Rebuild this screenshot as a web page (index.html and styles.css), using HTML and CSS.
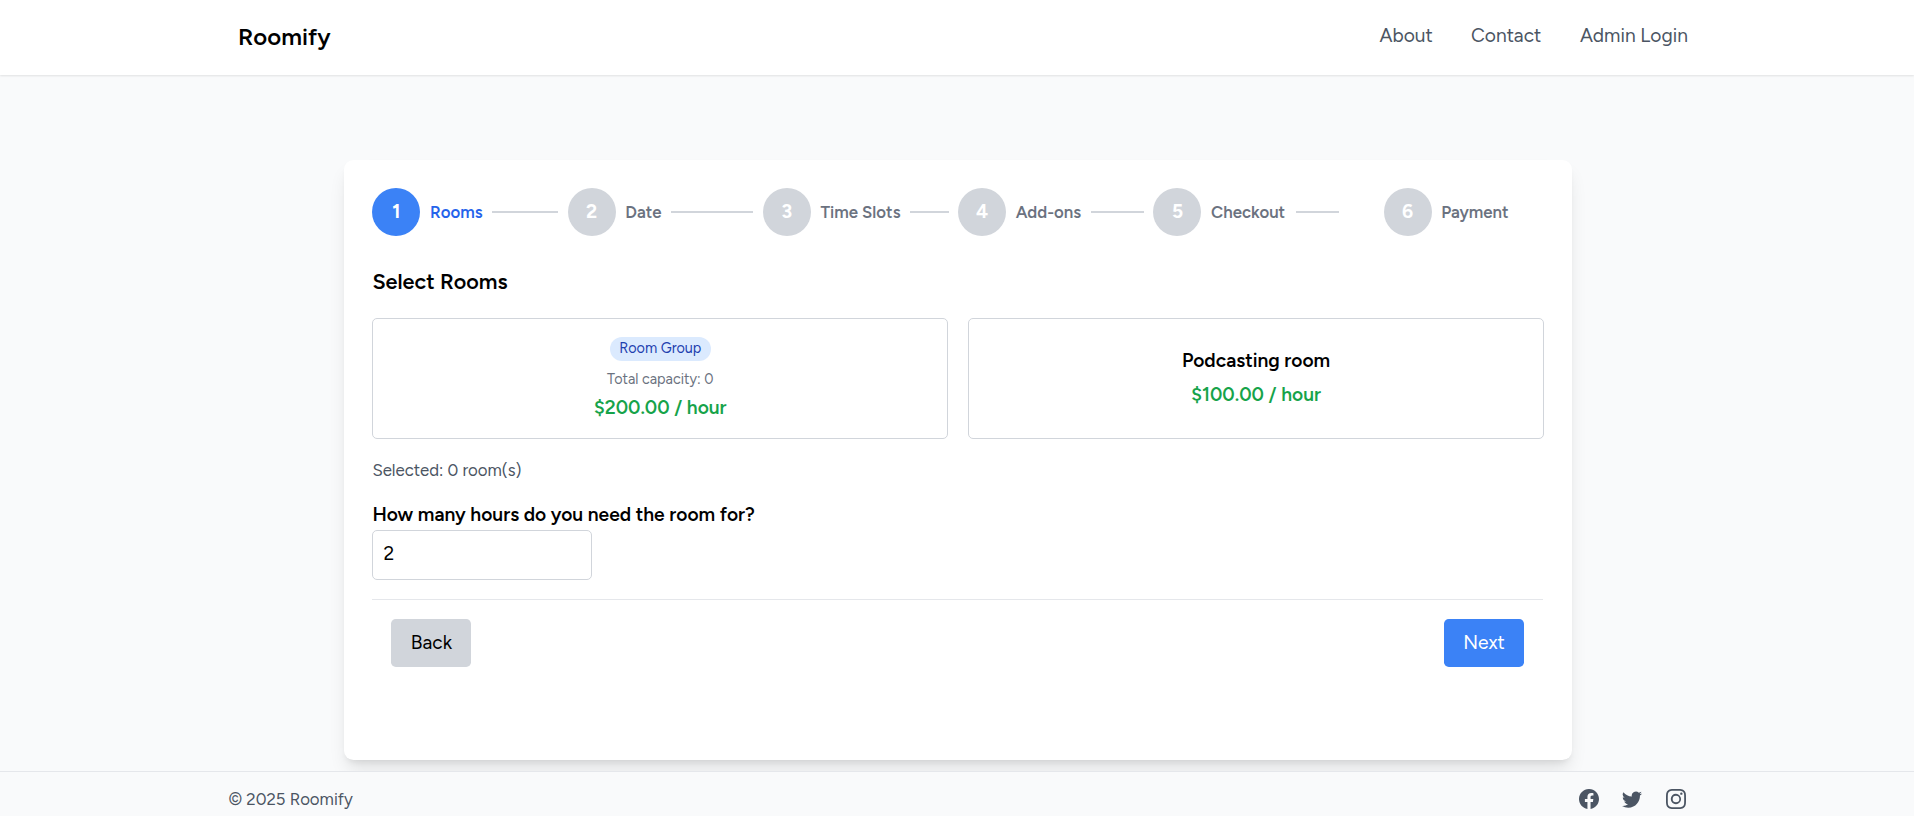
FILE: index.html
```html
<!DOCTYPE html>
<html lang="en">
<head>
<meta charset="utf-8">
<title>Roomify</title>
<link rel="stylesheet" href="styles.css">
</head>
<body>
<header class="header">
  <a class="brand">Roomify</a>
  <nav class="nav"><a class="about">About</a><a class="contact">Contact</a><a class="login">Admin Login</a></nav>
</header>
<main class="main">
  <section class="card">
    <ol class="steps">
      <li class="step active"><span class="dot">1</span><span class="label rooms">Rooms</span><i class="line"></i></li>
      <li class="step"><span class="dot">2</span><span class="label date">Date</span><i class="line"></i></li>
      <li class="step"><span class="dot">3</span><span class="label slots">Time Slots</span><i class="line"></i></li>
      <li class="step"><span class="dot">4</span><span class="label addons">Add-ons</span><i class="line"></i></li>
      <li class="step"><span class="dot">5</span><span class="label checkout">Checkout</span><i class="line"></i></li>
      <li class="step last"><span class="dot">6</span><span class="label payment">Payment</span></li>
    </ol>
    <h2 class="title">Select Rooms</h2>
    <div class="rooms-grid">
      <div class="room">
        <span class="badge">Room Group</span>
        <span class="capacity">Total capacity: 0</span>
        <span class="price">$200.00 / hour</span>
      </div>
      <div class="room single">
        <span class="name">Podcasting room</span>
        <span class="price">$100.00 / hour</span>
      </div>
    </div>
    <p class="selected">Selected: 0 room(s)</p>
    <label class="question" for="hours">How many hours do you need the room for?</label>
    <input class="hours" id="hours" type="text" value="2">
    <div class="actions">
      <button class="btn back">Back</button>
      <button class="btn next">Next</button>
    </div>
  </section>
</main>
<footer class="footer">
  <span class="copy">© 2025 Roomify</span>
  <div class="social">
    <svg viewBox="0 0 16 16"><path d="M16 8.049c0-4.446-3.582-8.05-8-8.05C3.58 0-.002 3.603-.002 8.05c0 4.017 2.926 7.347 6.75 7.951v-5.625h-2.03V8.05H6.75V6.275c0-2.017 1.195-3.131 3.022-3.131.876 0 1.791.157 1.791.157v1.98h-1.009c-.993 0-1.303.621-1.303 1.258v1.51h2.218l-.354 2.326H9.25V16c3.824-.604 6.75-3.934 6.75-7.951"/></svg>
    <svg viewBox="0 0 16 16"><path d="M5.026 15c6.038 0 9.341-5.003 9.341-9.334q.002-.211-.006-.422A6.7 6.7 0 0 0 16 3.542a6.7 6.7 0 0 1-1.889.518 3.3 3.3 0 0 0 1.447-1.817 6.5 6.5 0 0 1-2.087.793A3.286 3.286 0 0 0 7.875 6.03a9.32 9.32 0 0 1-6.767-3.429 3.29 3.29 0 0 0 1.018 4.382A3.3 3.3 0 0 1 .64 6.575v.045a3.29 3.29 0 0 0 2.632 3.218 3.2 3.2 0 0 1-.865.115 3 3 0 0 1-.614-.057 3.28 3.28 0 0 0 3.067 2.277A6.6 6.6 0 0 1 .78 13.58a6 6 0 0 1-.78-.045A9.34 9.34 0 0 0 5.026 15"/></svg>
    <svg viewBox="0 0 16 16"><path d="M8 0C5.829 0 5.556.01 4.703.048 3.85.088 3.269.222 2.76.42a3.9 3.9 0 0 0-1.417.923A3.9 3.9 0 0 0 .42 2.76C.222 3.268.087 3.85.048 4.7.01 5.555 0 5.827 0 8.001c0 2.172.01 2.444.048 3.297.04.852.174 1.433.372 1.942.205.526.478.972.923 1.417.444.445.89.719 1.416.923.51.198 1.09.333 1.942.372C5.555 15.99 5.827 16 8 16s2.444-.01 3.298-.048c.851-.04 1.434-.174 1.943-.372a3.9 3.9 0 0 0 1.416-.923c.445-.445.718-.891.923-1.417.197-.509.332-1.09.372-1.942C15.99 10.445 16 10.173 16 8s-.01-2.445-.048-3.299c-.04-.851-.175-1.433-.372-1.941a3.9 3.9 0 0 0-.923-1.417A3.9 3.9 0 0 0 13.24.42c-.51-.198-1.092-.333-1.943-.372C10.443.01 10.172 0 7.998 0zm-.717 1.442h.718c2.136 0 2.389.007 3.232.046.78.035 1.204.166 1.486.275.373.145.64.319.92.599s.453.546.598.92c.11.281.24.705.275 1.485.039.843.047 1.096.047 3.231s-.008 2.389-.047 3.232c-.035.78-.166 1.203-.275 1.485a2.5 2.5 0 0 1-.599.919c-.28.28-.546.453-.92.598-.28.11-.704.24-1.485.276-.843.038-1.096.047-3.232.047s-2.39-.009-3.233-.047c-.78-.036-1.203-.166-1.485-.276a2.5 2.5 0 0 1-.92-.598 2.5 2.5 0 0 1-.6-.92c-.109-.281-.24-.705-.275-1.485-.038-.843-.046-1.096-.046-3.233s.008-2.388.046-3.231c.036-.78.166-1.204.276-1.486.145-.373.319-.64.599-.92s.546-.453.92-.598c.282-.11.705-.24 1.485-.276.738-.034 1.024-.044 2.515-.045zm4.988 1.328a.96.96 0 1 0 0 1.92.96.96 0 0 0 0-1.92m-4.27 1.122a4.109 4.109 0 1 0 0 8.217 4.109 4.109 0 0 0 0-8.217m0 1.441a2.667 2.667 0 1 1 0 5.334 2.667 2.667 0 0 1 0-5.334"/></svg>
  </div>
</footer>
</body>
</html>
```
FILE: styles.css
```css
* { box-sizing: border-box; }
body {
  margin: 0;
  height: 816px;
  overflow: hidden;
  display: flex;
  flex-direction: column;
  background: #f9fafb;
  color: #000;
  font: 19.2px/28.8px Figtree, Lato, sans-serif;
}
.header {
  height: 75px;
  flex: none;
  padding: 0 226px 3px 238px;
  display: flex;
  align-items: center;
  justify-content: space-between;
  background: #fff;
  box-shadow: 0 1px 2px rgba(0, 0, 0, .1);
}
.brand { font-size: 24px; font-weight: 600; padding-top: 3px; }
.nav { display: flex; color: #4b5563; }
.nav a { white-space: nowrap; }
.about { width: 91.5px; }
.contact { width: 109px; }
.login { width: 108px; }
.main { flex: none; height: 696px; padding: 85px 342px 0 344px; }
.card {
  height: 600px;
  padding: 28px 28px 28px 28.4px;
  background: #fff;
  border-radius: 9.6px;
  box-shadow: 0 12px 18px -3px rgba(0, 0, 0, .1), 0 4.8px 7.2px -4px rgba(0, 0, 0, .1);
}
.steps { display: flex; list-style: none; margin: 0; padding: 0; }
.step { flex: 1 1 0; min-width: 0; display: flex; align-items: center; }
.dot {
  flex: none;
  width: 48px;
  height: 48px;
  border-radius: 50%;
  display: flex;
  align-items: center;
  justify-content: center;
  background: #d1d5db;
  color: #fff;
  font-weight: 700;
}
.active .dot { background: #3b82f6; }
.label {
  flex: none;
  margin-left: 9.6px;
  font-size: 16.8px;
  font-weight: 600;
  color: #6b7280;
  white-space: nowrap;
}
.active .label { color: #2563eb; }
.rooms { width: 52px; }
.date { width: 36px; }
.slots { width: 80px; }
.addons { width: 66px; }
.checkout { width: 75px; }
.payment { width: 68px; }
.line { flex: 1; height: 2px; margin: 0 9.6px; background: #d1d5db; }
.last { justify-content: center; }
.title { margin: 29px 0 21px; font-size: 21.6px; line-height: 32px; font-weight: 600; }
.rooms-grid { display: grid; grid-template-columns: 1fr 1fr; gap: 20px; }
.room {
  height: 121px;
  padding: 18px 0 0;
  border: 1px solid #d1d5db;
  border-radius: 5px;
  display: flex;
  flex-direction: column;
  align-items: center;
  white-space: nowrap;
}
.single { padding-top: 28px; gap: 5px; }
.badge {
  height: 24px;
  width: 101px;
  border-radius: 12px;
  background: #dbeafe;
  color: #1e40af;
  font-size: 14.4px;
  line-height: 23px;
  text-align: center;
}
.capacity { margin-top: 8px; font-size: 14.4px; line-height: 20px; color: #6b7280; }
.price { font-weight: 600; color: #16a34a; margin-top: 5px; }
.single .price { margin-top: 0; }
.name { font-weight: 600; }
.selected { margin: 19px 0 18px; font-size: 16.8px; line-height: 24px; color: #4b5563; }
.question { display: block; font-weight: 600; line-height: 30px; }
.hours {
  display: block;
  width: 220px;
  height: 50px;
  padding: 0 10px 3px;
  border: 1px solid #d1d5db;
  border-radius: 5px;
  font: inherit;
  background: #fff;
}
.actions {
  margin: 19px 1px 0 0;
  padding: 19px 19px 0 19px;
  border-top: 1px solid #e5e7eb;
  display: flex;
  justify-content: space-between;
}
.btn {
  width: 80px;
  height: 48px;
  padding: 0;
  border: 0;
  border-radius: 4.8px;
  font: inherit;
  background: #d1d5db;
  color: #000;
}
.next { background: #3b82f6; color: #fff; }
.footer {
  flex: none;
  height: 55px;
  padding: 0 228px 0 228.5px;
  border-top: 1px solid #e5e7eb;
  background: #f9fafb;
  display: flex;
  align-items: center;
  justify-content: space-between;
  font-size: 16.8px;
  color: #4b5563;
}
.social { display: flex; gap: 23.5px; }
.social svg { width: 20px; height: 20px; fill: #4b5563; }
.social svg:nth-child(2) { margin: 0 .5px 0 -.5px; }
```
